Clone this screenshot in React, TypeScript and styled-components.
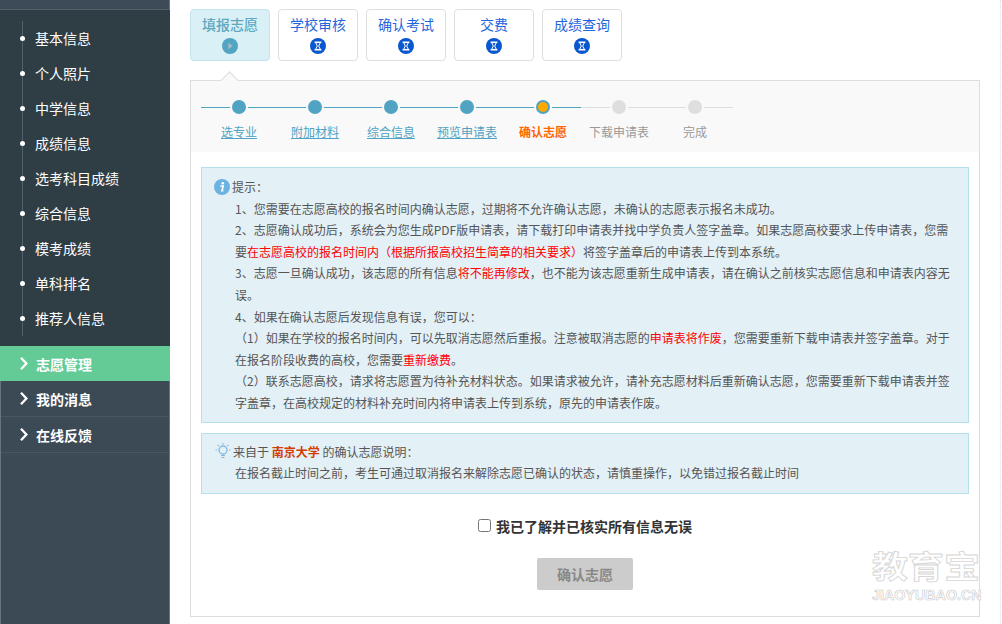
import React from "react";
import styled, { createGlobalStyle } from "styled-components";

const Global = createGlobalStyle`
  html, body { margin: 0; padding: 0; background: #fff; }
  body { font-family: "Noto Sans CJK SC", "Liberation Sans", sans-serif; font-size: 12px; color: #555; }
`;

const Page = styled.div`
  display: flex;
  box-sizing: border-box;
  width: 1001px;
  height: 624px;
  overflow: hidden;
  position: relative;
  border-right: 1px dotted #e2e2e2;
`;

const Sidebar = styled.aside`
  width: 170px;
  flex: none;
  display: flex;
  flex-direction: column;
  background: #3c4a56;
`;
const TopStrip = styled.div`
  height: 9px;
  flex: none;
  background: #3c4b57;
  border-bottom: 1px solid #566169;
  border-right: 1px solid #6a737a;
`;
const SubMenu = styled.ul`
  list-style: none;
  margin: 0;
  padding: 11px 0 10px;
  background: #2f3d45;
  position: relative;
  &::before {
    content: "";
    position: absolute;
    left: 22px;
    top: 11px;
    bottom: 10px;
    width: 1px;
    background: #55616a;
  }
`;
const SubItem = styled.li`
  height: 35px;
  line-height: 35px;
  padding-left: 35px;
  font-size: 14px;
  color: #fff;
  position: relative;
  &::before {
    content: "";
    position: absolute;
    left: 20px;
    top: 15px;
    width: 5px;
    height: 5px;
    border-radius: 50%;
    background: #fff;
  }
`;
const ActiveItem = styled.div`
  height: 35px;
  flex: none;
  display: flex;
  align-items: center;
  padding-left: 20px;
  gap: 8px;
  font-size: 14px;
  font-weight: 700;
  color: #fff;
  background: #64cb97;
`;
const LowerMenu = styled.div`
  flex: 1;
  border-left: 1px solid #6a737a;
  border-right: 1px solid #6a737a;
`;
const MenuItem = styled.div`
  height: 36px;
  box-sizing: border-box;
  display: flex;
  align-items: center;
  padding-left: 19px;
  gap: 8px;
  font-size: 14px;
  font-weight: 700;
  color: #fff;
  border-bottom: 1px solid #4a5660;
`;

const Main = styled.main`
  flex: 1;
  padding: 9px 20px 7px 20px;
  display: flex;
  flex-direction: column;
  min-width: 0;
`;
const Tabs = styled.div`
  display: flex;
  gap: 8px;
  height: 52px;
  flex: none;
`;
const Tab = styled.div<{ $active?: boolean }>`
  width: 80px;
  box-sizing: border-box;
  border: 1px solid ${p => (p.$active ? "#c4e3ec" : "#dedede")};
  border-radius: 4px;
  background: ${p => (p.$active ? "#d9f0f7" : "#fff")};
  color: ${p => (p.$active ? "#5ea8c0" : "#1f66dc")};
  font-size: 14px;
  font-weight: ${p => (p.$active ? 500 : 400)};
  display: flex;
  flex-direction: column;
  align-items: center;
  line-height: 20px;
  padding-top: 4px;
  gap: 4px;
`;
const Panel = styled.section`
  margin-top: 19px;
  flex: 1;
  border: 1px solid #ddd;
  position: relative;
  display: flex;
  flex-direction: column;
  &::before {
    content: "";
    position: absolute;
    left: 32px;
    top: -7px;
    width: 12px;
    height: 12px;
    background: #f9f9f9;
    border-left: 1px solid #ddd;
    border-top: 1px solid #ddd;
    transform: rotate(45deg);
  }
`;
const StepsBar = styled.div`
  height: 71px;
  flex: none;
  background: #f9f9f9;
  padding-left: 10px;
  display: flex;
  position: relative;
`;
const Step = styled.div`
  width: 76px;
  display: flex;
  flex-direction: column;
  align-items: center;
  position: relative;
`;
const StepLine = styled.div<{ $on: boolean }>`
  position: absolute;
  left: 0;
  right: 0;
  top: 26px;
  height: 1px;
  background: ${p => (p.$on ? "#50a3c2" : "#dedede")};
`;
const Dot = styled.div<{ $state: "done" | "cur" | "todo" }>`
  position: relative;
  margin-top: 19px;
  box-sizing: border-box;
  width: 14px;
  height: 14px;
  border-radius: 50%;
  border: ${p => (p.$state === "cur" ? "2px solid #50a3c2" : "none")};
  background: ${p => (p.$state === "done" ? "#50a3c2" : p.$state === "cur" ? "#ffa800" : "#dedede")};
  box-shadow: 0 0 0 2px #f9f9f9;
`;
const StepLabel = styled.div<{ $state: "done" | "cur" | "todo" }>`
  margin-top: 9px;
  font-size: 12px;
  line-height: 18px;
  white-space: nowrap;
  color: ${p => (p.$state === "done" ? "#50a3c2" : p.$state === "cur" ? "#ff6600" : "#999")};
  font-weight: ${p => (p.$state === "cur" ? 700 : 400)};
  text-decoration: ${p => (p.$state === "done" ? "underline" : "none")};
`;
const Body = styled.div`
  padding: 15px 10px 0;
  flex: 1;
  display: flex;
  flex-direction: column;
  min-height: 0;
`;
const Notice = styled.div`
  background: #e3f0f6;
  border: 1px solid #b5e1ea;
  color: #555;
  font-size: 12px;
  line-height: 21.6px;
`;
const TipBox = styled(Notice)`
  padding: 8px 12px 8px 12px;
`;
const NoticeTitle = styled.div<{ $gap: number }>`
  display: flex;
  align-items: center;
  gap: ${p => p.$gap}px;
`;
const TipBody = styled.div`
  padding-left: 21px;
`;
const Para = styled.p`
  margin: 0;
`;
const Red = styled.span`
  color: #ff0000;
`;
const SourceBox = styled(Notice)`
  margin-top: 10px;
  padding: 7px 12px 9px 12px;
`;
const School = styled.b`
  color: #d43b00;
  font-weight: 700;
`;
const SourceText = styled.div`
  padding-left: 21px;
`;
const Agree = styled.label`
  margin-top: 21px;
  height: 22px;
  display: flex;
  align-items: center;
  justify-content: center;
  gap: 5px;
  font-size: 14px;
  font-weight: 700;
  color: #333;
  input { margin: 0; width: 13px; height: 13px; }
`;
const Confirm = styled.button`
  align-self: center;
  margin-top: 21px;
  width: 96px;
  height: 32px;
  border: none;
  border-radius: 2px;
  background: #ccc;
  color: #888;
  font: 700 14px "Noto Sans CJK SC", sans-serif;
`;
const Watermark = styled.div`
  position: absolute;
  left: 872px;
  top: 549px;
  width: 110px;
  color: #fff;
  pointer-events: none;
`;
const WmMain = styled.div`
  font-size: 36px;
  line-height: 38px;
  height: 40px;
  font-weight: 700;
  white-space: nowrap;
  -webkit-text-stroke: 1px #d6d6d6;
  transform: scaleY(0.84);
  transform-origin: top left;
`;
const WmSub = styled.div`
  font: 700 14.3px/13px "Liberation Sans", sans-serif;
  white-space: nowrap;
  -webkit-text-stroke: 0.6px #cacaca;
`;

const Chevron = () => (
  <svg width="8" height="13" viewBox="0 0 8 13">
    <path d="M1 0.8 L6.4 6.5 L1 12.2" fill="none" stroke="#fff" strokeWidth="2.3" />
  </svg>
);
const PlayIcon = () => (
  <svg width="16" height="16" viewBox="0 0 16 16">
    <circle cx="8" cy="8" r="8" fill="#52a5c2" />
    <path d="M6.3 4.8 L10.6 8 L6.3 11.2 Z" fill="#a5bcc6" />
  </svg>
);
const Hourglass = () => (
  <svg width="16" height="16" viewBox="0 0 16 16">
    <circle cx="8" cy="8" r="8" fill="#0a58d0" />
    <path d="M4.6 4.2 H11.4 M4.6 11.8 H11.4" stroke="#fff" strokeWidth="1.4" />
    <path d="M5.6 4.6 H10.4 L8.7 8 L10.4 11.4 H5.6 L7.3 8 Z" fill="none" stroke="#fff" strokeWidth="1" />
  </svg>
);
const InfoIcon = () => (
  <svg width="16" height="16" viewBox="0 0 16 16">
    <circle cx="8" cy="8" r="8" fill="#6cb3e2" />
    <circle cx="8.8" cy="4.2" r="1.3" fill="#fff" />
    <path d="M6.4 7 H9.2 L8 11.6 H9.4" fill="none" stroke="#fff" strokeWidth="1.7" />
  </svg>
);
const BulbIcon = () => (
  <svg width="18" height="18" viewBox="0 0 18 18">
    <circle cx="9" cy="8" r="4" fill="none" stroke="#7fb8e2" strokeWidth="1.3" />
    <path d="M7 13.5 H11 M7.5 15.5 H10.5 M9 1 V2.5 M1.5 8 H3 M15 8 H16.5 M3.6 2.8 L4.7 3.9 M14.4 2.8 L13.3 3.9" stroke="#7fb8e2" strokeWidth="1.2" fill="none" />
  </svg>
);

type S = "done" | "cur" | "todo";
const steps: [string, S, boolean][] = [
  ["选专业", "done", true],
  ["附加材料", "done", true],
  ["综合信息", "done", true],
  ["预览申请表", "done", true],
  ["确认志愿", "cur", true],
  ["下载申请表", "todo", false],
  ["完成", "todo", false],
];
const subs = ["基本信息", "个人照片", "中学信息", "成绩信息", "选考科目成绩", "综合信息", "模考成绩", "单科排名", "推荐人信息"];

export default function App() {
  return (
    <Page>
      <Global />
      <Sidebar>
        <TopStrip />
        <SubMenu>
          {subs.map(s => (
            <SubItem key={s}>{s}</SubItem>
          ))}
        </SubMenu>
        <ActiveItem><Chevron />志愿管理</ActiveItem>
        <LowerMenu>
          <MenuItem><Chevron />我的消息</MenuItem>
          <MenuItem><Chevron />在线反馈</MenuItem>
        </LowerMenu>
      </Sidebar>
      <Main>
        <Tabs>
          <Tab $active>填报志愿<PlayIcon /></Tab>
          <Tab>学校审核<Hourglass /></Tab>
          <Tab>确认考试<Hourglass /></Tab>
          <Tab>交费<Hourglass /></Tab>
          <Tab>成绩查询<Hourglass /></Tab>
        </Tabs>
        <Panel>
          <StepsBar>
            {steps.map(([t, st, on]) => (
              <Step key={t}>
                <StepLine $on={on} />
                <Dot $state={st} />
                <StepLabel $state={st}>{t}</StepLabel>
              </Step>
            ))}
          </StepsBar>
          <Body>
            <TipBox>
              <NoticeTitle $gap={2}><InfoIcon />提示：</NoticeTitle>
              <TipBody>
                <Para>1、您需要在志愿高校的报名时间内确认志愿，过期将不允许确认志愿，未确认的志愿表示报名未成功。</Para>
                <Para>2、志愿确认成功后，系统会为您生成PDF版申请表，请下载打印申请表并找中学负责人签字盖章。如果志愿高校要求上传申请表，您需要<Red>在志愿高校的报名时间内（根据所报高校招生简章的相关要求）</Red>将签字盖章后的申请表上传到本系统。</Para>
                <Para>3、志愿一旦确认成功，该志愿的所有信息<Red>将不能再修改</Red>，也不能为该志愿重新生成申请表，请在确认之前核实志愿信息和申请表内容无误。</Para>
                <Para>4、如果在确认志愿后发现信息有误，您可以：</Para>
                <Para>（1）如果在学校的报名时间内，可以先取消志愿然后重报。注意被取消志愿的<Red>申请表将作废</Red>，您需要重新下载申请表并签字盖章。对于在报名阶段收费的高校，您需要<Red>重新缴费</Red>。</Para>
                <Para>（2）联系志愿高校，请求将志愿置为待补充材料状态。如果请求被允许，请补充志愿材料后重新确认志愿，您需要重新下载申请表并签字盖章，在高校规定的材料补充时间内将申请表上传到系统，原先的申请表作废。</Para>
              </TipBody>
            </TipBox>
            <SourceBox>
              <NoticeTitle $gap={1}><BulbIcon /><span>来自于 <School>南京大学</School> 的确认志愿说明：</span></NoticeTitle>
              <SourceText>在报名截止时间之前，考生可通过取消报名来解除志愿已确认的状态，请慎重操作，以免错过报名截止时间</SourceText>
            </SourceBox>
            <Agree><input type="checkbox" />我已了解并已核实所有信息无误</Agree>
            <Confirm>确认志愿</Confirm>
          </Body>
        </Panel>
      </Main>
      <Watermark>
        <WmMain>教育宝</WmMain>
        <WmSub>JIAOYUBAO.CN</WmSub>
      </Watermark>
    </Page>
  );
}
